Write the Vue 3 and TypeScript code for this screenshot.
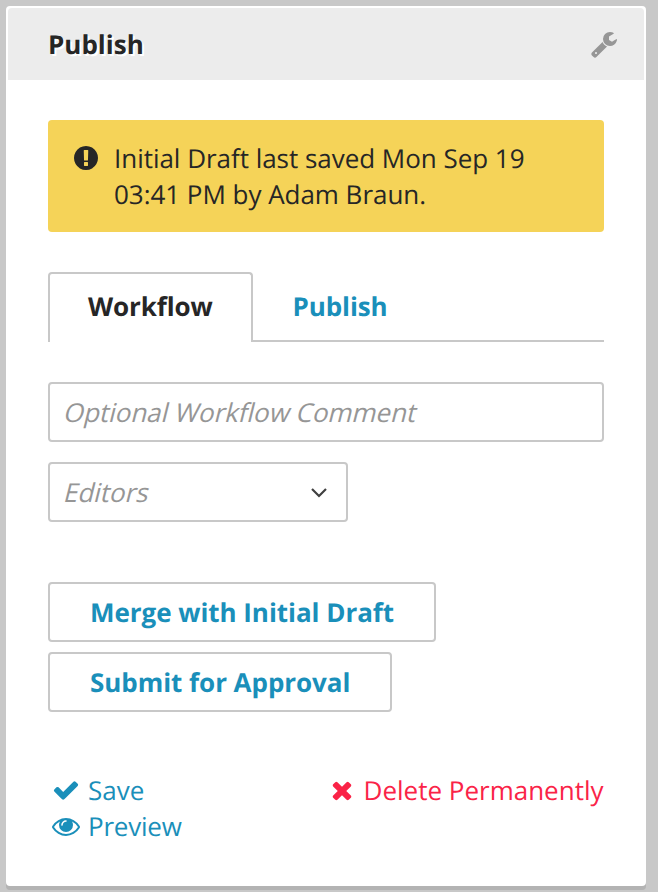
<script setup lang="ts">
import { ref } from 'vue'

type Tab = 'Workflow' | 'Publish'

const tabs: Tab[] = ['Workflow', 'Publish']
const activeTab = ref<Tab>('Workflow')
const comment = ref('')
const actions: string[] = ['Merge with Initial Draft', 'Submit for Approval']
</script>

<template>
  <section class="widget">
    <header class="widget-header">
      <h1>Publish</h1>
      <svg class="icon wrench" viewBox="0 0 1792 1792"><path d="M448 1472q0-26-19-45t-45-19-45 19-19 45 19 45 45 19 45-19 19-45zm644-420l-682 682q-37 37-90 37-52 0-91-37l-106-108q-38-36-38-90 0-53 38-91l681-681q39 98 114.500 173.500t173.500 114.500zm634-435q0 39-23 106-47 134-164.500 217.500t-258.500 83.500q-185 0-316.500-131.500t-131.500-316.500 131.500-316.500 316.500-131.500q58 0 121.500 16.500t107.500 46.500q16 11 16 28t-16 28l-293 169v224l193 107q5-3 79-48.500t135.500-81 70.500-35.500q15 0 23.500 10t8.500 25z" /></svg>
    </header>

    <div class="content">
      <div class="message">
        <svg class="icon" viewBox="0 0 1792 1792"><path d="M896 128q209 0 385.500 103t279.500 279.500 103 385.500-103 385.500-279.500 279.500-385.500 103-385.500-103-279.500-279.500-103-385.500 103-385.500 279.500-279.500 385.500-103zm128 1247v-190q0-14-9-23.500t-23-9.500h-192q-13 0-23 10t-10 23v190q0 13 10 23t23 10h192q14 0 23-9.500t9-23.500zm-2-344l18-621q0-12-10-18-10-8-24-8h-220q-14 0-24 8-10 6-10 18l17 621q0 10 10 17.500t24 7.500h185q14 0 23.500-7.500t10.500-17.500z" /></svg>
        <p>Initial Draft last saved Mon Sep 19<br />03:41 PM by Adam Braun.</p>
      </div>

      <nav class="tabs">
        <button
          v-for="tab in tabs"
          :key="tab"
          class="tab"
          :class="{ active: tab === activeTab }"
          @click="activeTab = tab"
        >{{ tab }}</button>
        <span class="tabs-rest"></span>
      </nav>

      <label class="field">
        <input v-model="comment" class="slanted" type="text" placeholder="Optional Workflow Comment" />
      </label>

      <button class="field select">
        <span class="slanted">Editors</span>
        <svg class="chevron" viewBox="0 0 18 12"><path d="M2 3 L9 10 L16 3" /></svg>
      </button>

      <div class="actions">
        <button v-for="action in actions" :key="action" class="action">{{ action }}</button>
      </div>

      <footer class="links">
        <div class="links-group">
          <a class="link">
            <svg class="icon" viewBox="0 0 1792 1792"><path d="M1671 566q0 40-28 68l-724 724-136 136q-28 28-68 28t-68-28l-136-136-362-362q-28-28-28-68t28-68l136-136q28-28 68-28t68 28l294 295 656-657q28-28 68-28t68 28l136 136q28 28 28 68z" /></svg>
            <span>Save</span>
          </a>
          <a class="link preview">
            <svg class="icon" viewBox="0 0 1792 1792"><path d="M1664 960q-152-236-381-353 61 104 61 225 0 185-131.500 316.500t-316.500 131.500-316.500-131.500-131.500-316.500q0-121 61-225-229 117-381 353 133 205 333.500 326.500t434.500 121.500 434.500-121.500 333.500-326.500zm-720-384q0-20-14-34t-34-14q-125 0-214.500 89.500t-89.500 214.500q0 20 14 34t34 14 34-14 14-34q0-86 61-147t147-61q20 0 34-14t14-34zm848 384q0 34-20 69-140 230-376.500 368.500t-499.500 138.500-499.500-139-376.500-368q-20-35-20-69t20-69q140-229 376.500-368t499.500-139 499.500 139 376.500 368q20 35 20 69z" /></svg>
            <span>Preview</span>
          </a>
        </div>
        <a class="link danger">
          <svg class="icon" viewBox="0 0 1792 1792"><path d="M1490 1322q0 40-28 68l-136 136q-28 28-68 28t-68-28l-294-294-294 294q-28 28-68 28t-68-28l-136-136q-28-28-28-68t28-68l294-294-294-294q-28-28-28-68t28-68l136-136q28-28 68-28t68 28l294 294 294-294q28-28 68-28t68 28l136 136q28 28 28 68t-28 68l-294 294 294 294q28 28 28 68z" /></svg>
          <span>Delete Permanently</span>
        </a>
      </footer>
    </div>
  </section>
</template>

<style>
body {
  background: #c8c8c8;
}
</style>

<style scoped>
.widget {
  box-sizing: border-box;
  width: 640px;
  height: 880px;
  margin: 6px;
  border: 2px solid #fff;
  border-radius: 4px;
  background: #fff;
  box-shadow: 0 4px 0 #b3b3b3;
  font: 26px/36px "Open Sans", sans-serif;
  text-rendering: geometricPrecision;
  color: #262626;
}

.widget-header {
  display: flex;
  align-items: center;
  justify-content: space-between;
  box-sizing: border-box;
  height: 72px;
  padding: 0 26px 0 40px;
  border-radius: 4px 4px 0 0;
  background: #ececec;
}

h1 {
  margin: 0;
  font-size: 26px;
  font-weight: 700;
  text-shadow: 2px 2px 0 #fff;
}

.icon {
  flex: none;
  width: 28px;
  height: 28px;
  fill: currentColor;
}

.wrench {
  color: #969696;
}

.content {
  padding: 40px;
}

.message {
  display: flex;
  gap: 14px;
  box-sizing: border-box;
  height: 112px;
  padding: 20px 24px;
  border-radius: 4px;
  background: #f5d358;
  letter-spacing: -0.03px;
}

.message .icon {
  margin-top: 4px;
}

.message p {
  margin: 0;
  white-space: nowrap;
}

button,
input {
  box-sizing: border-box;
  margin: 0;
  background: #fff;
  font: inherit;
  text-rendering: inherit;
}

.tabs {
  display: flex;
  height: 70px;
  margin-top: 40px;
}

.tab {
  padding: 0 40px;
  border: 0 solid #c8c8c8;
  border-bottom-width: 2px;
  color: #1a8fba;
  font-weight: 700;
  letter-spacing: -0.12px;
}

.tab.active {
  padding: 0 38px 4px;
  border-width: 2px 2px 0;
  border-radius: 4px 4px 0 0;
  color: #262626;
}

.tabs-rest {
  flex: 1;
  border-bottom: 2px solid #c8c8c8;
}

.field {
  display: flex;
  align-items: center;
  box-sizing: border-box;
  width: 556px;
  height: 60px;
  margin-top: 40px;
  padding: 0 14px 0 15px;
  border: 2px solid #c8c8c8;
  border-radius: 4px;
  color: #969696;
  letter-spacing: -0.03px;
}

.slanted {
  transform: skewX(-14deg);
}

input {
  width: 100%;
  padding: 0;
  border: 0;
  outline: none;
  color: inherit;
  letter-spacing: inherit;
}

input::placeholder {
  color: #969696;
  opacity: 1;
}

.select {
  justify-content: space-between;
  width: 300px;
  margin-top: 20px;
  padding-right: 18px;
}

.chevron {
  width: 18px;
  height: 12px;
  fill: none;
  stroke: #404040;
  stroke-width: 2.2;
}

.actions {
  display: flex;
  flex-direction: column;
  align-items: flex-start;
  gap: 10px;
  margin-top: 60px;
}

.action {
  height: 60px;
  padding: 0 40px;
  border: 2px solid #c8c8c8;
  border-radius: 4px;
  color: #1a8fba;
  font-weight: 700;
  letter-spacing: -0.045px;
}

.links {
  display: flex;
  align-items: flex-start;
  justify-content: space-between;
  margin-top: 60px;
}

.links-group {
  padding-left: 4px;
}

.link {
  display: flex;
  align-items: center;
  gap: 8px;
  color: #1a8fba;
}

.preview {
  letter-spacing: -0.22px;
}

.link .icon {
  margin-top: -1px;
}

.danger {
  margin-right: 0.5px;
  color: #fa2347;
}
</style>
